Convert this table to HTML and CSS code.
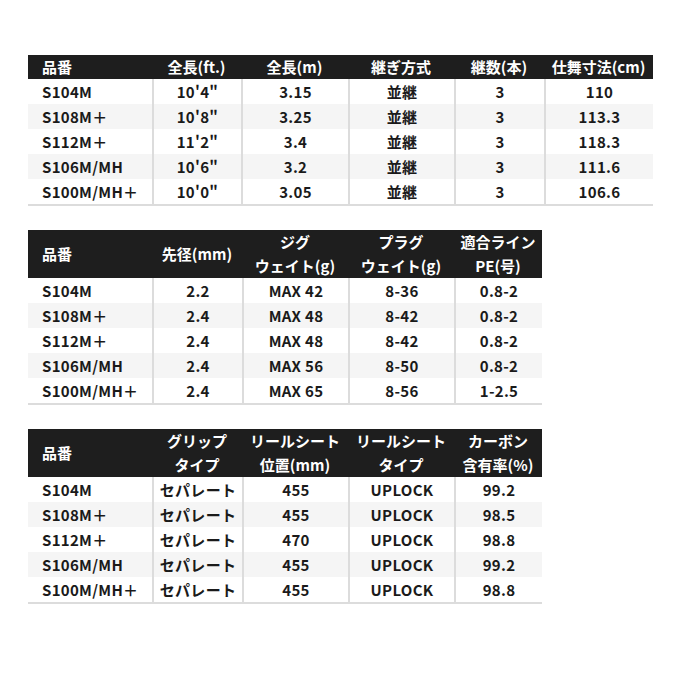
FILE: index.html
```html
<!DOCTYPE html>
<html lang="ja">
<head>
<meta charset="utf-8">
<link rel="stylesheet" href="styles.css">
</head>
<body>
<div class="page">
  <table class="spec t1">
    <colgroup><col class="c124"><col class="c89"><col class="c107"><col class="c106"><col class="c90"><col class="c109"></colgroup>
    <thead>
      <tr><th class="first">品番</th><th>全長(ft.)</th><th>全長(m)</th><th>継ぎ方式</th><th>継数(本)</th><th>仕舞寸法(cm)</th></tr>
    </thead>
    <tbody>
      <tr><td>S104M</td><td>10'4"</td><td>3.15</td><td>並継</td><td>3</td><td>110</td></tr>
      <tr><td>S108M＋</td><td>10'8"</td><td>3.25</td><td>並継</td><td>3</td><td>113.3</td></tr>
      <tr><td>S112M＋</td><td>11'2"</td><td>3.4</td><td>並継</td><td>3</td><td>118.3</td></tr>
      <tr><td>S106M/MH</td><td>10'6"</td><td>3.2</td><td>並継</td><td>3</td><td>111.6</td></tr>
      <tr><td>S100M/MH＋</td><td>10'0"</td><td>3.05</td><td>並継</td><td>3</td><td>106.6</td></tr>
    </tbody>
  </table>

  <table class="spec t2">
    <colgroup><col class="c124"><col class="c90"><col class="c106"><col class="c106"><col class="c88"></colgroup>
    <thead>
      <tr><th class="first">品番</th><th>先径(mm)</th><th>ジグ<br>ウェイト(g)</th><th>プラグ<br>ウェイト(g)</th><th>適合ライン<br>PE(号)</th></tr>
    </thead>
    <tbody>
      <tr><td>S104M</td><td>2.2</td><td>MAX 42</td><td>8-36</td><td>0.8-2</td></tr>
      <tr><td>S108M＋</td><td>2.4</td><td>MAX 48</td><td>8-42</td><td>0.8-2</td></tr>
      <tr><td>S112M＋</td><td>2.4</td><td>MAX 48</td><td>8-42</td><td>0.8-2</td></tr>
      <tr><td>S106M/MH</td><td>2.4</td><td>MAX 56</td><td>8-50</td><td>0.8-2</td></tr>
      <tr><td>S100M/MH＋</td><td>2.4</td><td>MAX 65</td><td>8-56</td><td>1-2.5</td></tr>
    </tbody>
  </table>

  <table class="spec t3">
    <colgroup><col class="c124"><col class="c90"><col class="c106"><col class="c106"><col class="c88"></colgroup>
    <thead>
      <tr><th class="first">品番</th><th>グリップ<br>タイプ</th><th>リールシート<br>位置(mm)</th><th>リールシート<br>タイプ</th><th>カーボン<br>含有率(%)</th></tr>
    </thead>
    <tbody>
      <tr><td>S104M</td><td>セパレート</td><td>455</td><td>UPLOCK</td><td>99.2</td></tr>
      <tr><td>S108M＋</td><td>セパレート</td><td>455</td><td>UPLOCK</td><td>98.5</td></tr>
      <tr><td>S112M＋</td><td>セパレート</td><td>470</td><td>UPLOCK</td><td>98.8</td></tr>
      <tr><td>S106M/MH</td><td>セパレート</td><td>455</td><td>UPLOCK</td><td>99.2</td></tr>
      <tr><td>S100M/MH＋</td><td>セパレート</td><td>455</td><td>UPLOCK</td><td>98.8</td></tr>
    </tbody>
  </table>
</div>
</body>
</html>
```

FILE: styles.css
```css
html, body {
  margin: 0;
  padding: 0;
  background: #ffffff;
}

.page {
  padding: 55px 0 0 28px;
  display: flex;
  flex-direction: column;
  align-items: flex-start;
  gap: 24px;
  font-family: "Noto Sans CJK JP", "Noto Sans", sans-serif;
  font-weight: 700;
  font-size: 15px;
  color: #1a1a1a;
}

.spec {
  border-collapse: separate;
  border-spacing: 0;
  table-layout: fixed;
  border-bottom: 2px solid #dcdcdc;
}

.c124 { width: 124px; }
.c88 { width: 88px; }
.c89 { width: 89px; }
.c90 { width: 90px; }
.c106 { width: 106px; }
.c107 { width: 107px; }
.c109 { width: 109px; }

.spec th {
  background: #1e1e1e;
  color: #ffffff;
  font-weight: 700;
  padding: 0;
  text-align: center;
  line-height: 24px;
  height: 24px;
  white-space: nowrap;
}

.t2 th, .t3 th {
  height: 48px;
}

.spec th.first,
.spec td:first-child {
  text-align: left;
  padding-left: 14px;
}

.spec td {
  height: 25px;
  padding: 0;
  line-height: 25px;
  text-align: center;
  white-space: nowrap;
  letter-spacing: 0.3px;
}

.spec td + td {
  border-left: 2px solid #dcdcdc;
}

.spec tbody tr:nth-child(even) td {
  background: #f5f5f5;
}
```
